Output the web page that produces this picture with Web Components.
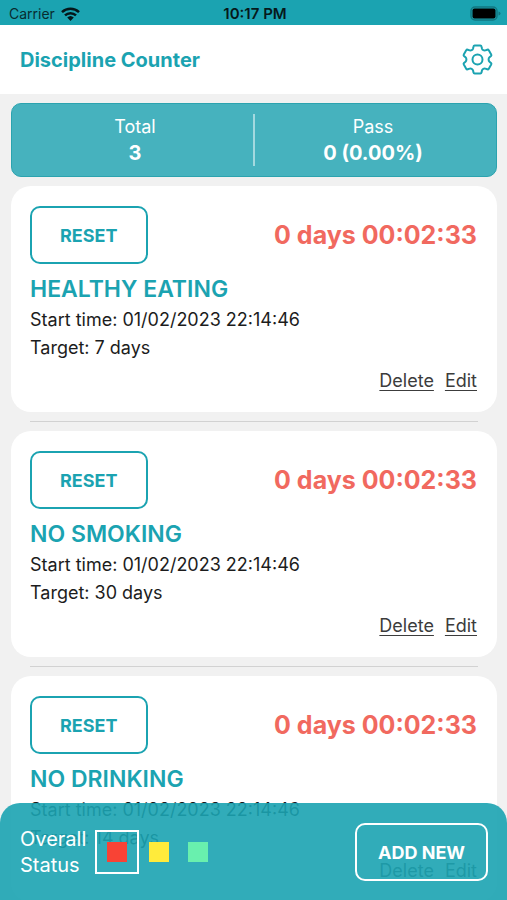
<!DOCTYPE html>
<html lang="en">
<head>
<meta charset="utf-8">
<meta name="viewport" content="width=device-width, initial-scale=1">
<title>Discipline Counter</title>
<style>
  body {
    margin: 0;
    font-family: Inter, "Liberation Sans", sans-serif;
    --primary: #1ba3b1;
    --danger: #f1695f;
  }
</style>
</head>
<body>
<discipline-app></discipline-app>

<script>
// components/status-bar

class StatusBar extends HTMLElement {
  constructor() {
    super();
    this.attachShadow({ mode: 'open' });
    this.shadowRoot.innerHTML = `
      <style>
        :host {
          display: grid;
          grid-template-columns: 1fr auto 1fr;
          align-items: center;
          height: 25px;
          padding: 2px 6px 0 9px;
          box-sizing: border-box;
          background: var(--primary);
          color: #082c30;
          font-size: 14px;
        }
        .carrier { display: flex; align-items: center; gap: 6px; }
        .time { font-size: 15px; font-weight: 600; color: #06191b; }
        .battery { justify-self: end; }
        svg { display: block; }
      </style>
      <span class="carrier">Carrier
        <svg width="19" height="14" viewBox="0 0 19 14" aria-hidden="true">
          <g fill="none" stroke="#04171a" stroke-width="2.5">
            <path d="M1 5.1a12.3 12.3 0 0 1 17 0"/>
            <path d="M4 8.4a8 8 0 0 1 11 0"/>
          </g>
          <path fill="#04171a" d="M6.2 10.6a4.8 4.8 0 0 1 6.6 0L9.5 14z"/>
        </svg>
      </span>
      <span class="time">10:17 PM</span>
      <svg class="battery" width="31" height="15" viewBox="0 0 31 15" aria-hidden="true">
        <rect x="1" y="1" width="26" height="13" rx="4" fill="none" stroke="#127781" stroke-width="1.5"/>
        <rect x="2.500" y="2.500" width="23" height="10" rx="2" fill="#000"/>
        <path d="M28.5 5.500q2 .6 2 2t-2 2z" fill="#127781"/>
      </svg>
    `;
  }
}
customElements.define('status-bar', StatusBar);

// components/app-header

class AppHeader extends HTMLElement {
  constructor() {
    super();
    this.attachShadow({ mode: 'open' });
    this.shadowRoot.innerHTML = `
      <style>
        :host {
          display: flex;
          align-items: center;
          justify-content: space-between;
          height: 69px;
          padding: 0 14px 0 20px;
          box-sizing: border-box;
          background: #fff;
          color: var(--primary);
        }
        h1 { margin: 0; font-size: 20px; font-weight: 700; }
        button {
          padding: 0;
          border: 0;
          background: none;
          color: inherit;
        }
        svg { display: block; }
      </style>
      <h1><slot></slot></h1>
      <button type="button" aria-label="Settings">
        <svg width="31" height="31" viewBox="0 0 31 31" fill="none" stroke="currentColor" stroke-width="2" stroke-linejoin="round">
          <path d="M12.7 1.5h5.6q1 0 1.2 1l.5 2.2q.3 1 1.3 1.5t2 .2l2-.7q1-.3 1.5.6l2.4 4.1q.5.9-.2 1.6l-1.5 1.300q-.9.8-.9 2.200t.9 2.200l1.500 1.300q.7.7.2 1.600l-2.400 4.100q-.5.9-1.500.6l-2-.7q-1-.3-2 .2t-1.300 1.500l-.5 2.200q-.2 1-1.200 1h-5.600q-1 0-1.200-1l-.5-2.200q-.3-1-1.300-1.500t-2-.2l-2 .7q-1 .3-1.500-.6l-2.400-4.100q-.5-.9.2-1.600l1.500-1.300q.9-.8.9-2.200t-.9-2.200l-1.500-1.300q-.7-.7-.2-1.600l2.400-4.100q.5-.9 1.500-.6l2 .7q1 .3 2-.2t1.300-1.500l.5-2.200q.2-1 1.200-1z"/>
          <circle cx="15.5" cy="15.5" r="5"/>
        </svg>
      </button>
    `;
  }
}
customElements.define('app-header', AppHeader);

// components/summary-panel

class SummaryPanel extends HTMLElement {
  constructor() {
    super();
    this.attachShadow({ mode: 'open' });
    this.shadowRoot.innerHTML = `
      <style>
        :host {
          display: flex;
          padding: 10px 5px;
          border: 1px solid #2ba3af;
          border-radius: 10px;
          background: #46b2be;
          color: #fff;
          text-align: center;
        }
        div { flex: 1; }
        div + div { border-left: 2px solid #a3d9df; }
        p { margin: 0; font-size: 18px; line-height: 26px; }
        p + p { font-size: 20px; font-weight: 700; }
      </style>
      <div>
        <p>Total</p>
        <p>${this.getAttribute('total')}</p>
      </div>
      <div>
        <p>Pass</p>
        <p>${this.getAttribute('pass')}</p>
      </div>
    `;
  }
}
customElements.define('summary-panel', SummaryPanel);

// components/counter-card

class CounterCard extends HTMLElement {
  constructor() {
    super();
    this.attachShadow({ mode: 'open' });
    this.shadowRoot.innerHTML = `
      <style>
        :host {
          display: block;
          padding: 20px 20px 17px 19px;
          border-radius: 20px;
          background: #fff;
          color: #1c1c1c;
          font-size: 18px;
          line-height: 28px;
        }
        .top { display: flex; align-items: center; justify-content: space-between; }
        button {
          height: 58px;
          padding: 0 28px;
          border: 2px solid var(--primary);
          border-radius: 10px;
          background: #fff;
          color: var(--primary);
          font: 700 18px Inter, "Liberation Sans", sans-serif;
        }
        .elapsed { color: var(--danger); font-size: 25px; font-weight: 700; }
        h2 {
          margin: 8px 0 0;
          color: var(--primary);
          font-size: 23px;
          font-weight: 600;
          line-height: 34px;
        }
        p { margin: 0; }
        .actions { display: flex; justify-content: flex-end; gap: 11px; margin-top: 5px; }
        a { color: #3c3c3c; text-underline-offset: 3px; }
      </style>
      <div class="top">
        <button type="button">RESET</button>
        <span class="elapsed">${this.getAttribute('elapsed')}</span>
      </div>
      <h2><slot></slot></h2>
      <p>Start time: ${this.getAttribute('start')}</p>
      <p>Target: ${this.getAttribute('target')}</p>
      <div class="actions">
        <a href="#delete">Delete</a>
        <a href="#edit">Edit</a>
      </div>
    `;
  }
}
customElements.define('counter-card', CounterCard);

// components/app-footer

class AppFooter extends HTMLElement {
  constructor() {
    super();
    this.attachShadow({ mode: 'open' });
    this.shadowRoot.innerHTML = `
      <style>
        :host {
          display: flex;
          align-items: center;
          justify-content: space-between;
          padding: 20px 19px 19px 20px;
          border-radius: 20px 20px 0 0;
          background: rgba(27, 163, 177, 0.9);
          color: #fff;
        }
        fieldset {
          display: flex;
          align-items: center;
          gap: 10px;
          margin: 0;
          padding: 0;
          border: 0;
        }
        .label { width: 65px; font-size: 20px; line-height: 26px; }
        .levels { display: flex; align-items: center; }
        input {
          appearance: none;
          width: 20px;
          height: 20px;
          margin: 0 9px 0 10px;
          background: var(--level);
        }
        input:checked {
          box-sizing: border-box;
          width: 44px;
          height: 44px;
          margin: 0;
          padding: 10px;
          border: 2px solid #fff;
          background-clip: content-box;
        }
        button {
          height: 58px;
          padding: 0 21px;
          border: 2px solid #fff;
          border-radius: 10px;
          background: none;
          color: #fff;
          font: 700 18px Inter, "Liberation Sans", sans-serif;
        }
      </style>
      <fieldset aria-labelledby="status">
        <span class="label" id="status">Overall Status</span>
        <span class="levels">
          <input type="radio" name="level" aria-label="Red" style="--level: #f84335" checked>
          <input type="radio" name="level" aria-label="Yellow" style="--level: #ffeb3b">
          <input type="radio" name="level" aria-label="Green" style="--level: #69f0ae">
        </span>
      </fieldset>
      <button type="button">ADD NEW</button>
    `;
  }
}
customElements.define('app-footer', AppFooter);

// components/discipline-app

class DisciplineApp extends HTMLElement {
  constructor() {
    super();
    this.attachShadow({ mode: 'open' });
    this.shadowRoot.innerHTML = `
      <style>
        :host {
          display: flex;
          flex-direction: column;
          position: relative;
          height: 100vh;
          background: #f1f1f1;
        }
        summary-panel { margin: 9px 10px 9px 11px; }
        main {
          flex: 1;
          min-height: 0;
          padding: 0 10px 0 11px;
          overflow-y: auto;
          scrollbar-width: none;
        }
        hr {
          height: 1px;
          margin: 9px 19px;
          border: 0;
          background: #d2d2d2;
        }
        /* the list scrolls underneath the footer */
        app-footer { position: absolute; right: 0; bottom: 0; left: 0; }
      </style>
      <status-bar></status-bar>
      <app-header>Discipline Counter</app-header>
      <summary-panel total="3" pass="0 (0.00%)"></summary-panel>
      <main>
        <counter-card elapsed="0 days 00:02:33" start="01/02/2023 22:14:46" target="7 days">HEALTHY EATING</counter-card>
        <hr>
        <counter-card elapsed="0 days 00:02:33" start="01/02/2023 22:14:46" target="30 days">NO SMOKING</counter-card>
        <hr>
        <counter-card elapsed="0 days 00:02:33" start="01/02/2023 22:14:46" target="14 days">NO DRINKING</counter-card>
      </main>
      <app-footer></app-footer>
    `;
  }
}
customElements.define('discipline-app', DisciplineApp);
</script>
</body>
</html>
